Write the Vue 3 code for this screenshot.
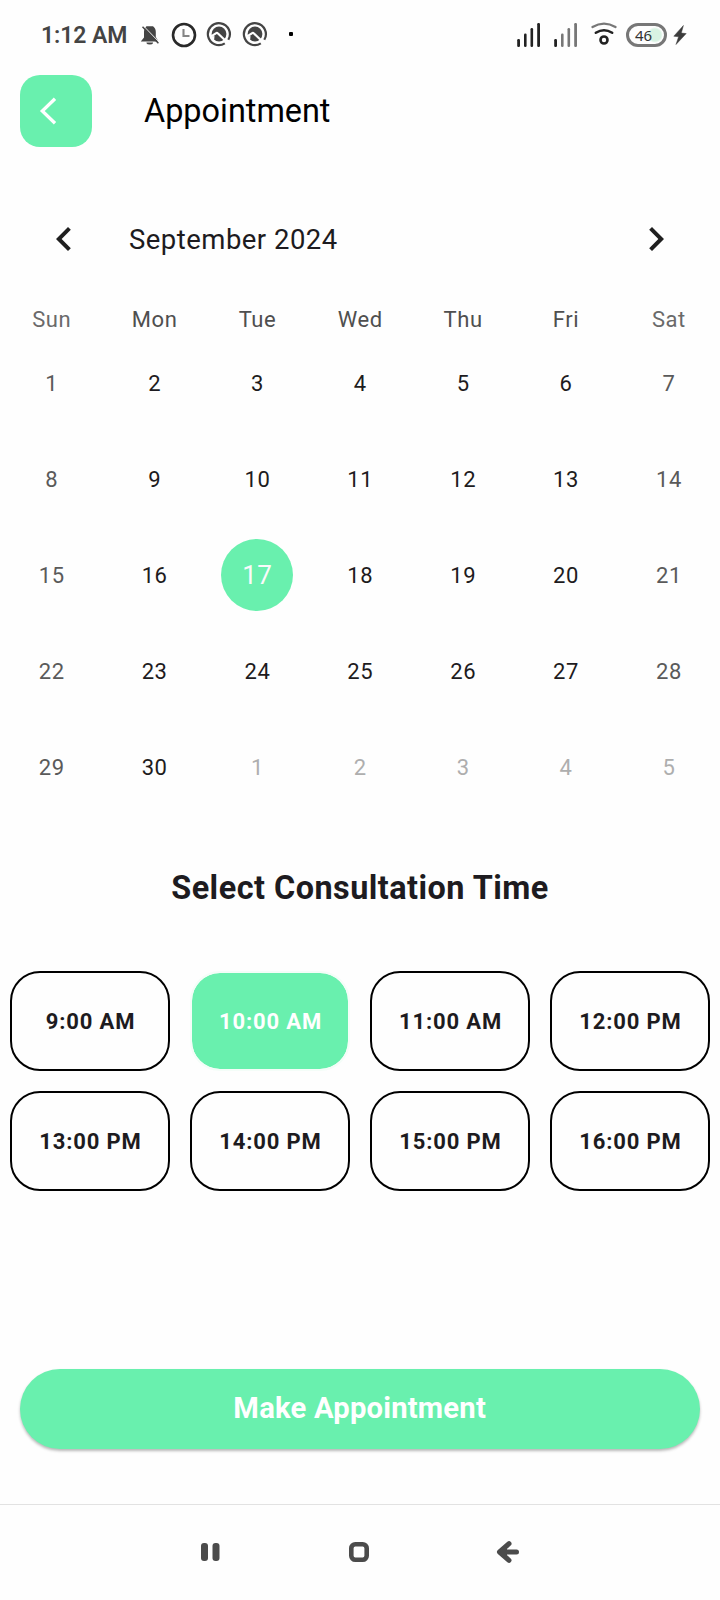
<script setup>
const weekdays = ['Sun', 'Mon', 'Tue', 'Wed', 'Thu', 'Fri', 'Sat']

const days = Array.from({ length: 35 }, (_, i) => ({
  key: i,
  label: i < 30 ? i + 1 : i - 29,
  weekend: i % 7 === 0 || i % 7 === 6,
  outside: i >= 30,
  selected: i === 16,
}))

const slots = [
  '9:00 AM', '10:00 AM', '11:00 AM', '12:00 PM',
  '13:00 PM', '14:00 PM', '15:00 PM', '16:00 PM',
]
const selectedSlot = '10:00 AM'
</script>

<template>
  <div class="screen">
    <div class="status">
      <span class="clock">1:12 AM</span>
      <svg class="bell" width="20" height="20" viewBox="0 0 20 20">
        <path d="M6.500 1.200h6.500C15 2.600 15.800 4.500 15.800 7v5L18.500 16.600H0.800L4 12.500V7C4 4.500 4.800 2.600 6.500 1.200Z" fill="#444" />
        <path d="M6.500 17.600h6.500v0.600q-0.500 1.200-3.200 1.200t-3.300-1.200Z" fill="#444" />
        <path d="M3.400 0.900L19.400 17.300" stroke="#fefefe" stroke-width="1" />
        <path d="M2.500 1.800L18.400 18.300" stroke="#444" stroke-width="1.500" />
      </svg>
      <svg class="alarm" width="26" height="26" viewBox="0 0 26 26">
        <circle cx="13" cy="13" r="11" fill="none" stroke="#292929" stroke-width="2.600" />
        <path d="M12.500 7v7h6" fill="none" stroke="#858585" stroke-width="2.100" />
      </svg>
      <svg v-for="n in 2" :key="n" class="badge" width="26" height="26" viewBox="0 0 26 26">
        <circle cx="13" cy="13" r="7.400" fill="#444" />
        <path d="M4 16.200L9.800 12.300Q11 11.500 12 12.500L23 23" fill="none" stroke="#fefefe" stroke-width="2.200" />
        <path d="M4.500 15.500L8.500 15L8.200 18.500L7 20Z" fill="#fefefe" />
        <path d="M18.800 22.400A11 11 0 1 1 22.300 18.800" fill="none" stroke="#444" stroke-width="2.200" />
      </svg>
      <i class="dot"></i>
      <svg class="signal" width="24" height="26" viewBox="0 0 24 26">
        <g fill="#222">
          <rect x="0.200" y="17" width="2.800" height="8" rx="1.200" />
          <rect x="7" y="11.500" width="2.600" height="13.500" rx="1.200" />
          <rect x="13.500" y="6" width="2.600" height="19" rx="1.200" />
          <rect x="20.200" y="1" width="2.800" height="24" rx="1.200" />
        </g>
      </svg>
      <svg class="signal second" width="24" height="26" viewBox="0 0 24 26">
        <rect x="0.200" y="17" width="2.800" height="8" rx="1.200" fill="#222" />
        <g fill="#777">
          <rect x="7" y="11.500" width="2.600" height="13.500" rx="1.200" />
          <rect x="13.500" y="6" width="2.600" height="19" rx="1.200" />
          <rect x="20.200" y="1" width="2.800" height="24" rx="1.200" />
        </g>
      </svg>
      <svg class="wifi" width="26" height="24" viewBox="0 0 26 24">
        <path d="M1.500 5Q13-1.800 24.500 5" fill="none" stroke="#777" stroke-width="2.300" stroke-linecap="round" />
        <path d="M4.800 10.800Q13 5.600 21.200 10.800" fill="none" stroke="#222" stroke-width="2.500" stroke-linecap="round" />
        <circle cx="13" cy="18" r="3.500" fill="none" stroke="#222" stroke-width="2.600" />
      </svg>
      <span class="battery"><span class="level">46</span></span>
      <svg class="bolt" width="14" height="20" viewBox="0 0 14 20">
        <path d="M10.400 0.500L0.800 11.200L5.600 11.800L3 19.500L13.200 8.600L8.300 8Z" fill="#3c3c3c" stroke="#3c3c3c" stroke-width="0.500" />
      </svg>
    </div>

    <header class="appbar">
      <button class="back" aria-label="Back">
        <svg width="18" height="28" viewBox="0 0 18 28">
          <path d="M16 1.700L3.300 14L16 26.300" fill="none" stroke="#fff" stroke-width="3.300" />
        </svg>
      </button>
      <h1 class="title">Appointment</h1>
    </header>

    <section class="calendar">
      <div class="month">
        <svg width="48" height="48" viewBox="0 0 24 24">
          <path d="M15.410 7.410L14 6l-6 6 6 6 1.410-1.410L10.830 12z" fill="#1f1f1f" />
        </svg>
        <span class="month-name">September 2024</span>
        <svg width="48" height="48" viewBox="0 0 24 24">
          <path d="M10 6L8.590 7.410 13.170 12l-4.580 4.590L10 18l6-6z" fill="#1f1f1f" />
        </svg>
      </div>
      <div class="week names">
        <span v-for="(d, i) in weekdays" :key="d" :class="{ end: i === 0 || i === 6 }">{{ d }}</span>
      </div>
      <div class="week days">
        <span v-for="d in days" :key="d.key" :class="{ weekend: d.weekend, outside: d.outside }">
          <b v-if="d.selected" class="selected">{{ d.label }}</b>
          <template v-else>{{ d.label }}</template>
        </span>
      </div>
    </section>

    <h2 class="subtitle">Select Consultation Time</h2>

    <div class="slots">
      <button v-for="s in slots" :key="s" class="slot" :class="{ chosen: s === selectedSlot }">{{ s }}</button>
    </div>

    <button class="submit"><span class="submit-label">Make Appointment</span></button>

    <nav class="nav">
      <svg width="20" height="20" viewBox="0 0 20 20">
        <rect x="1" y="1" width="7" height="18" rx="3" fill="#4b4b4b" />
        <rect x="12.500" y="1" width="7" height="18" rx="3" fill="#4b4b4b" />
      </svg>
      <svg class="home" width="20" height="20" viewBox="0 0 20 20">
        <rect x="2.300" y="2.300" width="15.400" height="15.400" rx="4" fill="none" stroke="#4b4b4b" stroke-width="4.600" />
      </svg>
      <svg width="24" height="22" viewBox="0 0 24 22">
        <path d="M13 2.700L3.500 11L13 19.300M4 11H20.500" fill="none" stroke="#4b4b4b" stroke-width="5" stroke-linecap="round" stroke-linejoin="round" />
        <path d="M4 11L11 5V17Z" fill="#4b4b4b" />
      </svg>
    </nav>
  </div>
</template>

<style>
body {
  background: #fefefe;
}
</style>

<style scoped>
.screen {
  width: 720px;
  height: 1600px;
  display: flex;
  flex-direction: column;
  font-family: Roboto, sans-serif;
  color: #1d1b20;
  overflow: hidden;
}
button {
  font: inherit;
  border: 0;
  padding: 0;
}
h1, h2 {
  margin: 0;
}
.status {
  height: 70px;
  box-sizing: border-box;
  padding: 0 33px 0 41px;
  display: flex;
  align-items: center;
  flex: none;
}
.clock {
  width: 99px;
  font-size: 23px;
  font-weight: 600;
  line-height: 28px;
  letter-spacing: -0.1px;
  padding-top: 1px;
  color: #444;
  white-space: nowrap;
}
.bell { margin: 0 11px 0 0; }
.alarm { margin-right: 9px; }
.badge { margin: -2px 10px 0 0; }
.dot {
  width: 4px;
  height: 4px;
  margin: -2px auto 0 11px;
  background: #000;
  border-radius: 1px;
}
.second { margin-left: 13px; }
.wifi { margin: -2px 9px 0 13px; }
.battery {
  width: 41px;
  height: 24px;
  box-sizing: border-box;
  border: 3px solid #777;
  border-radius: 12px;
  background: radial-gradient(circle at 26px 9px, #d9f3e3 6px, #fefefe 8px);
  display: flex;
  align-items: center;
}
.level {
  margin: -1px 0 0 6px;
  font-family: "Noto Sans", sans-serif;
  font-size: 15px;
  line-height: 18px;
  color: #333;
}
.bolt { margin-left: 6px; }
.appbar {
  height: 82px;
  box-sizing: border-box;
  padding: 5px 20px;
  display: flex;
  align-items: center;
  flex: none;
}
.back {
  width: 72px;
  height: 72px;
  box-sizing: border-box;
  padding-left: 19px;
  border-radius: 20px;
  background: #69f0ae;
  display: flex;
  align-items: center;
}
.title {
  margin: -2px 0 0 52px;
  font-size: 34px;
  font-weight: 400;
  line-height: 38px;
  transform: scaleX(0.953);
  transform-origin: left;
  color: #000;
}
.calendar {
  margin-top: 63px;
  flex: none;
}
.month {
  height: 48px;
  padding: 0 40px;
  display: flex;
  align-items: center;
}
.month-name {
  flex: 1;
  margin-left: 40.5px;
  font-size: 28px;
  letter-spacing: 0.5px;
  transform: scaleX(0.981);
  transform-origin: left;
}
.week {
  display: grid;
  grid-template-columns: repeat(7, 1fr);
}
.week span {
  display: flex;
  align-items: center;
  justify-content: center;
  font-size: 22px;
  letter-spacing: 0.6px;
  text-indent: 0.7px;
}
.names {
  margin-top: 40px;
  height: 32px;
}
.names span { color: #4f4f4f; }
.names .end { color: #6a6a6a; }
.days { grid-auto-rows: 96px; }
.days .weekend { color: #5a5a5a; }
.days .outside { color: #aeaeae; }
.selected {
  width: 72px;
  height: 72px;
  border-radius: 50%;
  background: #69f0ae;
  color: #fafafa;
  font-size: 26px;
  font-weight: 400;
  letter-spacing: 0.5px;
  text-indent: 0.5px;
  display: flex;
  align-items: center;
  justify-content: center;
}
.subtitle {
  margin-top: 53px;
  font-size: 34px;
  line-height: 38px;
  font-weight: 700;
  letter-spacing: 0.5px;
  transform: scaleX(0.953);
  text-align: center;
}
.slots {
  margin: 65px 10px 0;
  display: grid;
  grid-template-columns: repeat(4, 1fr);
  gap: 20px;
}
.slot {
  height: 100px;
  box-sizing: border-box;
  border: 2px solid #000;
  border-radius: 30px;
  background: transparent;
  color: #1d1b20;
  font-size: 22px;
  font-weight: 700;
  letter-spacing: 0.85px;
  text-indent: 1px;
}
.slot.chosen {
  border-color: #f4fdf8;
  background: #69f0ae;
  background-clip: padding-box;
  color: #fff;
}
.submit {
  height: 80px;
  box-sizing: border-box;
  padding-bottom: 4px;
  margin: 178px 20px 0;
  border-radius: 40px;
  background: #69f0ae;
  box-shadow: 0 2px 3px rgba(0, 0, 0, 0.28);
  color: #fff;
  font-size: 30px;
  font-weight: 700;
  flex: none;
}
.submit-label {
  display: inline-block;
  letter-spacing: 0.2px;
  transform: scaleX(0.974);
}
.nav {
  height: 96px;
  margin-top: auto;
  box-sizing: border-box;
  border-top: 1px solid #e2e2e2;
  padding: 0 0 2px 200px;
  display: flex;
  align-items: center;
}
.home { margin: 0 127px 0 129px; }
</style>
